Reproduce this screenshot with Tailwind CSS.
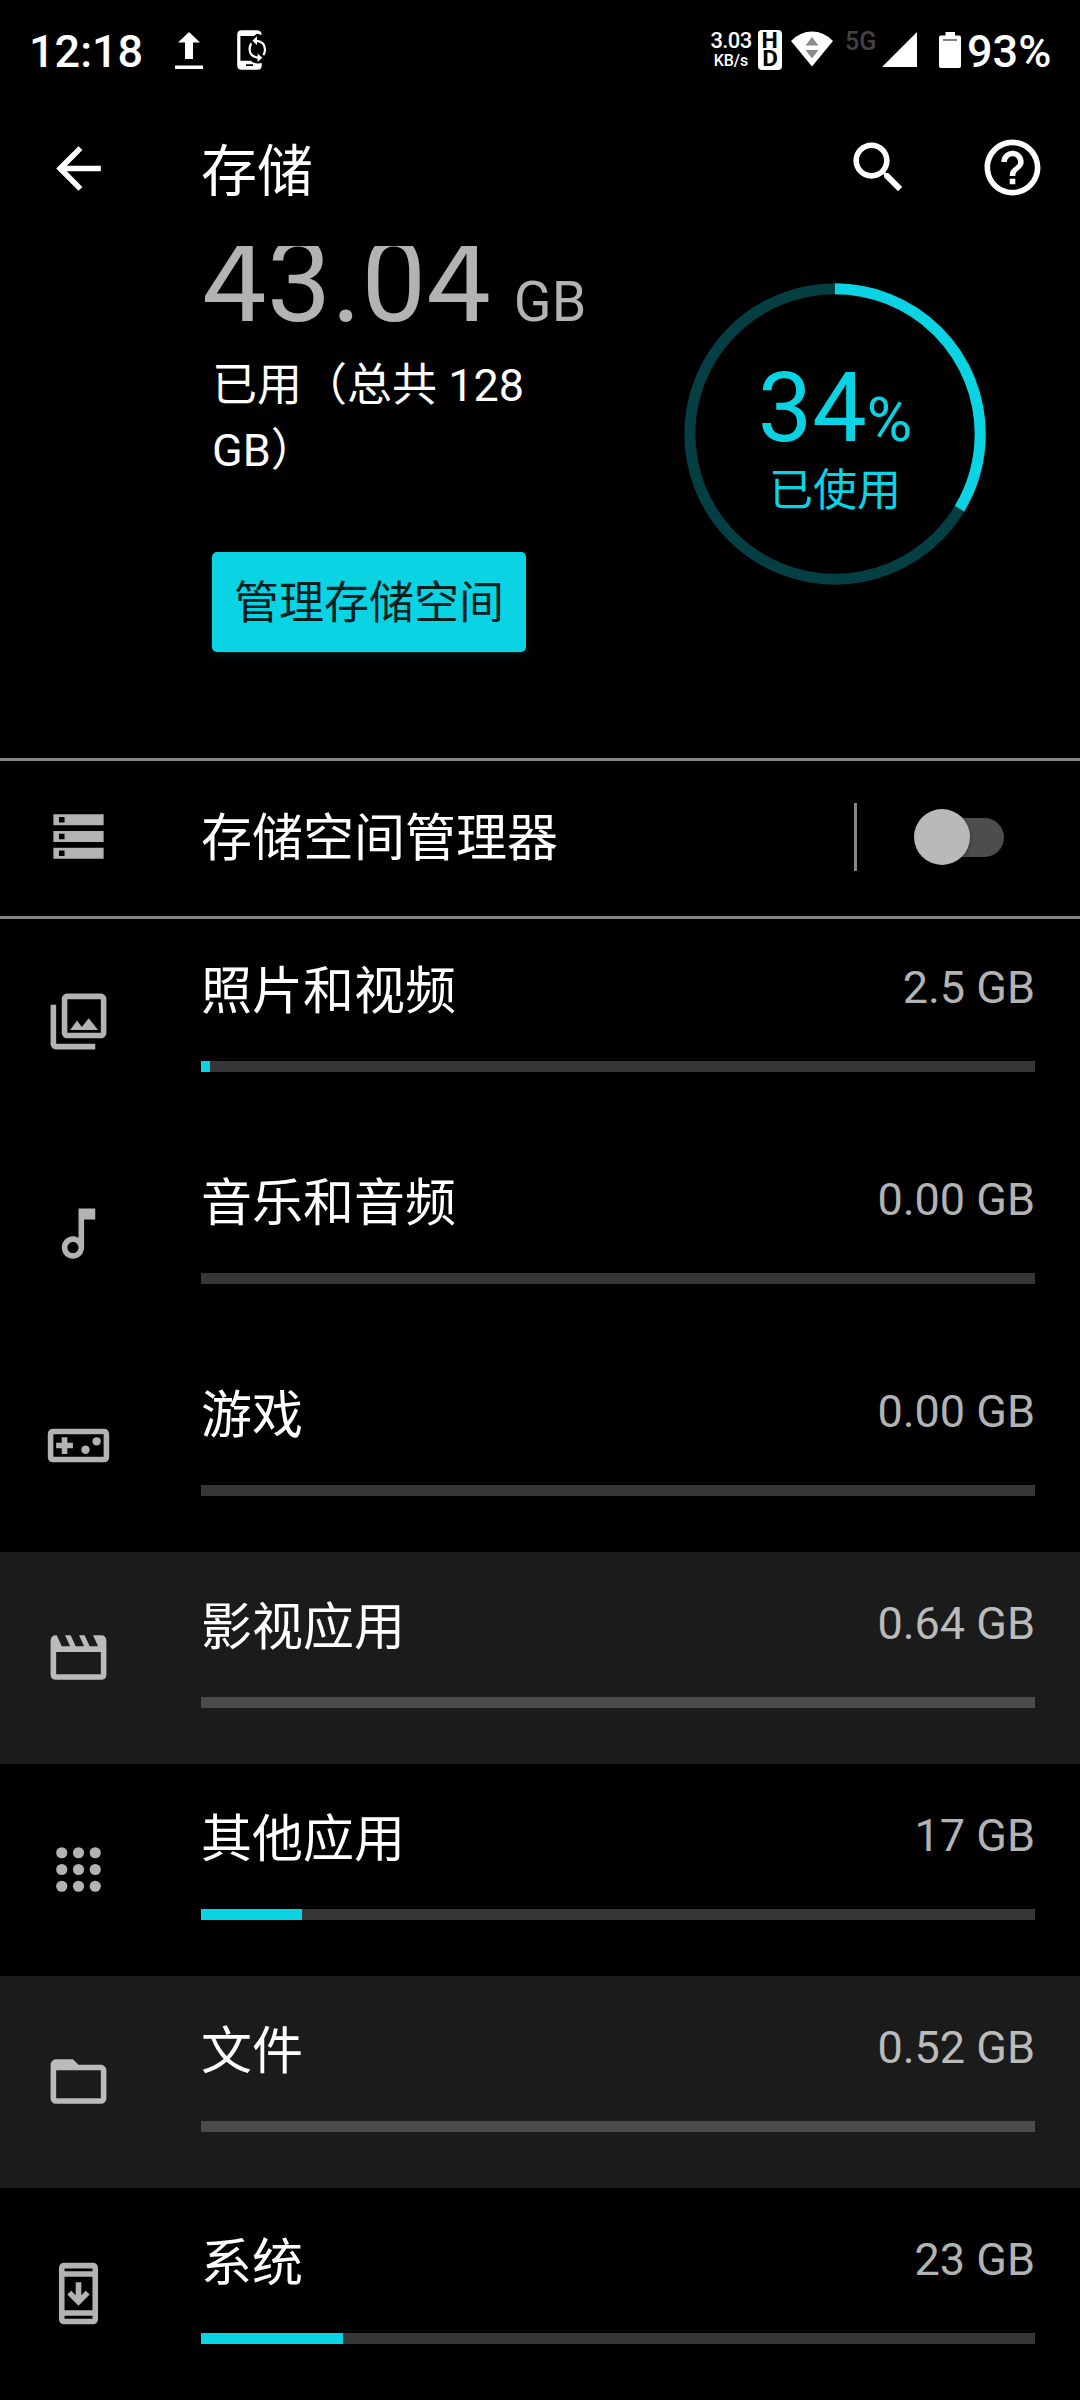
<!DOCTYPE html>
<html lang="zh-CN">
<head>
<meta charset="utf-8">
<title>存储</title>
<script src="https://cdn.jsdelivr.net/npm/@tailwindcss/browser@4"></script>
</head>
<body class="bg-black">
<div class="w-[1080px] h-[2400px] overflow-hidden bg-black text-white font-['Roboto','Noto_Sans_CJK_SC',sans-serif] flex flex-col">

  <!-- Status bar -->
  <div class="h-[100px] shrink-0 flex items-start pl-[29px] pr-[29px]">
    <div class="mt-[22px] w-[146px] text-[45px] leading-[60px] font-medium whitespace-nowrap">12:18</div>
    <svg class="mt-[32px] w-[28px] h-[38px]" viewBox="0 0 28 38" fill="#fff"><path d="M14 0L25 10.500H18V27H10V10.500H3zM0 33.500h28v3.500H0z"/></svg>
    <svg class="mt-[30px] ml-[34px] w-[30px] h-[40px]" viewBox="0 0 30 40" fill="#fff"><path fill-rule="evenodd" d="M4.500 .3H20.500Q24.700 .8 24.700 5L20 3.800L17 6H3.400V30.700H13.500Q18 34.500 24.700 33V36Q24.500 39.700 20.500 39.700H4.500Q.5 39.700 .2 36V4.500Q.5 .3 4.500 .3zM9 34.200V36H16V34.200z"/><path d="M18.500 10.700Q28 11.500 28 19.500Q28 22.500 26.300 25.200M22 27.700Q12.600 27 12.600 19Q12.600 16 14.300 13.300" fill="none" stroke="#fff" stroke-width="2.200"/><path d="M20 6.300V15L15.300 10.700zM20.600 23.400V32L25.300 27.700z"/></svg>
    <div class="flex-1"></div>
    <div class="mt-[29px] w-[42px] mr-[6px] flex flex-col items-center whitespace-nowrap">
      <div class="text-[22px] leading-[23px] font-medium tracking-[-0.6px]">3.03</div>
      <div class="text-[16px] leading-[17px] font-medium">KB/s</div>
    </div>
    <div class="mt-[30px] w-[24px] h-[40px] rounded-[4px] bg-white text-black flex flex-col items-center font-bold text-[22px] leading-[18px] pt-[2px]">
      <div class="scale-x-105">H</div>
      <div class="scale-x-110">D</div>
    </div>
    <svg class="mt-[31px] ml-[9px] w-[42px] h-[36px]" viewBox="0 0 42 36"><path fill="#fff" d="M0 10Q9 .5 21 .5T42 10L21 35.500z"/><path fill="#8c8c8c" d="M21 6L27.500 14.500H14.500zM14.500 19H27.500L21 27.500z"/></svg>
    <div class="mt-[28px] ml-[12px] w-[30px] text-[25px] leading-[28px] font-medium text-[#424242] whitespace-nowrap">5G</div>
    <svg class="mt-[32px] ml-[7px] w-[35px] h-[35px]" viewBox="0 0 35 35"><path fill="#fff" d="M35 0V35H0z"/></svg>
    <svg class="mt-[32px] ml-[22px] w-[22px] h-[36px]" viewBox="0 0 22 36"><path fill="#fff" fill-rule="evenodd" d="M6.500 0H16V3.500H20Q22 3.500 22 5.500V34Q22 36 20 36H2Q0 36 0 34V5.500Q0 3.500 2 3.500H6.500zM4 7.500V8.500H18V7.500z"/></svg>
    <div class="mt-[22px] ml-[6px] w-[84px] text-[45px] leading-[60px] font-medium whitespace-nowrap">93%</div>
  </div>

  <!-- App bar -->
  <div class="h-[146px] shrink-0 flex items-start pl-[45px] pr-[34px] pt-[34px]">
    <svg class="mt-px w-[67px] h-[67px]" viewBox="0 0 24 24" fill="#fff"><path d="M20 11H7.830l5.590-5.590L12 4l-8 8 8 8 1.410-1.410L7.830 13H20v-2z"/></svg>
    <div class="ml-[89px] mt-px text-[56px] leading-[74px]">存储</div>
    <div class="flex-1"></div>
    <svg class="w-[67px] h-[67px]" viewBox="0 0 24 24" fill="#fff"><path d="M15.500 14h-.79l-.28-.27C15.410 12.590 16 11.110 16 9.500 16 5.910 13.090 3 9.500 3S3 5.910 3 9.500 5.910 16 9.500 16c1.610 0 3.090-.59 4.230-1.570l.27.28v.79l5 4.990L20.490 19l-4.990-5zm-6 0C7.010 14 5 11.990 5 9.500S7.010 5 9.500 5 14 7.010 14 9.500 11.990 14 9.500 14z"/></svg>
    <svg class="ml-[67px] w-[67px] h-[67px]" viewBox="0 0 24 24" fill="#fff"><path d="M11 18h2v-2h-2v2zm1-16C6.480 2 2 6.480 2 12s4.480 10 10 10 10-4.480 10-10S17.520 2 12 2zm0 18c-4.410 0-8-3.590-8-8s3.590-8 8-8 8 3.590 8 8-3.590 8-8 8zm0-14c-2.210 0-4 1.790-4 4h2c0-1.100.9-2 2-2s2 .9 2 2c0 2-3 1.750-3 5h2c0-2.250 3-2.500 3-5 0-2.210-1.790-4-4-4z"/></svg>
  </div>

  <!-- Usage summary -->
  <div class="h-[512px] shrink-0 overflow-hidden flex items-start">
    <div class="ml-[201px] w-[483px]">
      <div class="-mt-[14px] pl-px text-[115px] leading-[100px] h-[100px] text-[#b3b3b3] whitespace-nowrap">43.04<span class="text-[55.500px] ml-[23px]">GB</span></div>
      <div class="ml-[11px] mt-[21px] text-[45px] leading-[65px]">已用（总共 128<br>GB）</div>
      <div class="ml-[11px] mt-[69px] w-[314px] h-[100px] rounded-[5px] bg-[#0ad4e4] text-[#03201f] text-[45px] leading-[104px] text-center shadow-[0_3px_6px_rgba(10,212,228,0.12)]">管理存储空间</div>
    </div>
    <div class="relative mt-[37px] w-[302px] h-[302px]">
      <svg class="w-[302px] h-[302px]" viewBox="0 0 302 302" fill="none" stroke-width="11"><circle cx="151" cy="151" r="145.200" stroke="#033f43"/><circle cx="151" cy="151" r="145.200" stroke="#0ad4e4" pathLength="100" stroke-dasharray="33.600 66.400" transform="rotate(-90 151 151)"/></svg>
      <div class="absolute inset-0 pt-[75px] text-[#0ad4e4] text-center whitespace-nowrap">
        <div class="text-[97px] leading-[100px] h-[100px]">34<span class="text-[62px]">%</span></div>
        <div class="text-[44px] leading-[67px]">已使用</div>
      </div>
    </div>
  </div>

  <!-- Storage manager -->
  <div class="h-[158px] shrink-0 border-t-3 border-[#868686] flex items-center pl-[45px] pr-[76px]">
    <svg class="-mt-[4px] w-[67px] h-[67px]" viewBox="0 0 24 24" fill="#b3b3b3"><path fill-rule="evenodd" d="M3 4H21V8H3zM5 5V7H7V5zM3 10H21V14H3zM5 11V13H7V11zM3 16H21V20H3zM5 17V19H7V17z"/></svg>
    <div class="ml-[89px] mt-px text-[51px] leading-[66px]">存储空间管理器</div>
    <div class="flex-1"></div>
    <div class="w-[3px] h-[68px] bg-[#868686] -mt-[4px]"></div>
    <div class="-mt-[3px] ml-[57px] w-[90px] h-[57px] flex items-center">
      <div class="size-[56px] rounded-full bg-[#b9b9b9] z-10 shadow-[0_2px_4px_rgba(0,0,0,0.3)]"></div>
      <div class="-ml-[46px] w-[80px] h-[39px] rounded-full bg-[#4d4d4d]"></div>
    </div>
  </div>

  <!-- Categories -->
  <div class="h-[212px] shrink-0 flex pl-[45px] pr-[45px] border-t-3 border-[#868686]">
    <svg class="mt-[69px] w-[67px] h-[67px]" viewBox="0 0 24 24" fill="#b3b3b3"><path d="M20 4v12H8V4h12m0-2H8c-1.100 0-2 .9-2 2v12c0 1.100.9 2 2 2h12c1.100 0 2-.9 2-2V4c0-1.100-.9-2-2-2zm-8.500 9.670l1.690 2.260 2.480-3.100L19 15H9zM2 6v14c0 1.100.9 2 2 2h14v-2H4V6H2z"/></svg>
    <div class="ml-[89px] flex-1 pt-[41px]">
      <div class="flex justify-between h-[101px]"><div class="-mt-px text-[51px] leading-[66px]">照片和视频</div><div class="text-[45px] leading-[56px] text-[#b3b3b3]">2.5 GB</div></div>
      <div class="h-[11px] bg-[#373737]"><div class="h-full bg-[#0ad4e4]" style="width:9px"></div></div>
    </div>
  </div>
  <div class="h-[212px] shrink-0 flex pl-[45px] pr-[45px]">
    <svg class="mt-[72px] w-[67px] h-[67px]" viewBox="0 0 24 24" fill="#b3b3b3"><path d="M12 3l.01 10.550c-.59-.34-1.270-.55-2-.55C7.790 13 6 14.790 6 17s1.790 4 4.010 4S14 19.210 14 17V7h4V3h-6zm-1.990 16c-1.100 0-2-.9-2-2s.9-2 2-2 2 .9 2 2-.9 2-2 2z"/></svg>
    <div class="ml-[89px] flex-1 pt-[44px]">
      <div class="flex justify-between h-[101px]"><div class="-mt-px text-[51px] leading-[66px]">音乐和音频</div><div class="text-[45px] leading-[56px] text-[#b3b3b3]">0.00 GB</div></div>
      <div class="h-[11px] bg-[#373737]"></div>
    </div>
  </div>
  <div class="h-[212px] shrink-0 flex pl-[45px] pr-[45px]">
    <svg class="mt-[72px] w-[67px] h-[67px]" viewBox="0 0 24 24" fill="#b3b3b3"><path fill-rule="evenodd" d="M3 6H21Q23 6 23 8V16Q23 18 21 18H3Q1 18 1 16V8Q1 6 3 6zM3 8V16H21V8z"/><path d="M6 9H8V11H10V13H8V15H6V13H4V11H6z"/><circle cx="14.500" cy="13.500" r="1.500"/><circle cx="18.500" cy="10.500" r="1.500"/></svg>
    <div class="ml-[89px] flex-1 pt-[44px]">
      <div class="flex justify-between h-[101px]"><div class="-mt-px text-[51px] leading-[66px]">游戏</div><div class="text-[45px] leading-[56px] text-[#b3b3b3]">0.00 GB</div></div>
      <div class="h-[11px] bg-[#373737]"></div>
    </div>
  </div>
  <div class="h-[212px] shrink-0 flex pl-[45px] pr-[45px] bg-[#1b1b1b]">
    <svg class="mt-[72px] w-[67px] h-[67px]" viewBox="0 0 24 24" fill="#bbb"><path fill-rule="evenodd" d="M4 4H20Q22 4 22 6V18Q22 20 20 20H4Q2 20 2 18V6Q2 4 4 4zM4.200 4L6 8H9L7.200 4zM9.200 4L11 8H14L12.200 4zM14.200 4L16 8H19L17.200 4zM4 10V18H20V10z"/></svg>
    <div class="ml-[89px] flex-1 pt-[44px]">
      <div class="flex justify-between h-[101px]"><div class="-mt-px text-[51px] leading-[66px]">影视应用</div><div class="text-[45px] leading-[56px] text-[#bbb]">0.64 GB</div></div>
      <div class="h-[11px] bg-[#4b4b4b]"></div>
    </div>
  </div>
  <div class="h-[212px] shrink-0 flex pl-[45px] pr-[45px]">
    <svg class="mt-[72px] w-[67px] h-[67px]" viewBox="0 0 24 24" fill="#b3b3b3"><circle cx="6" cy="6" r="2"/><circle cx="12" cy="6" r="2"/><circle cx="18" cy="6" r="2"/><circle cx="6" cy="12" r="2"/><circle cx="12" cy="12" r="2"/><circle cx="18" cy="12" r="2"/><circle cx="6" cy="18" r="2"/><circle cx="12" cy="18" r="2"/><circle cx="18" cy="18" r="2"/></svg>
    <div class="ml-[89px] flex-1 pt-[44px]">
      <div class="flex justify-between h-[101px]"><div class="-mt-px text-[51px] leading-[66px]">其他应用</div><div class="text-[45px] leading-[56px] text-[#b3b3b3]">17 GB</div></div>
      <div class="h-[11px] bg-[#373737]"><div class="h-full bg-[#0ad4e4]" style="width:101px"></div></div>
    </div>
  </div>
  <div class="h-[212px] shrink-0 flex pl-[45px] pr-[45px] bg-[#1b1b1b]">
    <svg class="mt-[72px] w-[67px] h-[67px]" viewBox="0 0 24 24" fill="#bbb"><path d="M20 6h-8l-2-2H4c-1.100 0-1.990.9-1.990 2L2 18c0 1.100.9 2 2 2h16c1.100 0 2-.9 2-2V8c0-1.100-.9-2-2-2zm0 12H4V8h16v10z"/></svg>
    <div class="ml-[89px] flex-1 pt-[44px]">
      <div class="flex justify-between h-[101px]"><div class="-mt-px text-[51px] leading-[66px]">文件</div><div class="text-[45px] leading-[56px] text-[#bbb]">0.52 GB</div></div>
      <div class="h-[11px] bg-[#4b4b4b]"></div>
    </div>
  </div>
  <div class="h-[212px] shrink-0 flex pl-[45px] pr-[45px]">
    <svg class="mt-[72px] w-[67px] h-[67px]" viewBox="0 0 24 24" fill="#b3b3b3"><path fill-rule="evenodd" d="M7 1H17Q19 1 19 3V21Q19 23 17 23H7Q5 23 5 21V3Q5 1 7 1zM7 3V4H17V3zM7 6V18H17V6zM7 20V21H17V20z"/><path d="M13 8h-2v4.600L9.400 11 8 12.400l4 4 4-4L14.600 11 13 12.600z"/></svg>
    <div class="ml-[89px] flex-1 pt-[44px]">
      <div class="flex justify-between h-[101px]"><div class="-mt-px text-[51px] leading-[66px]">系统</div><div class="text-[45px] leading-[56px] text-[#b3b3b3]">23 GB</div></div>
      <div class="h-[11px] bg-[#373737]"><div class="h-full bg-[#0ad4e4]" style="width:142px"></div></div>
    </div>
  </div>
</div>
</body>
</html>
